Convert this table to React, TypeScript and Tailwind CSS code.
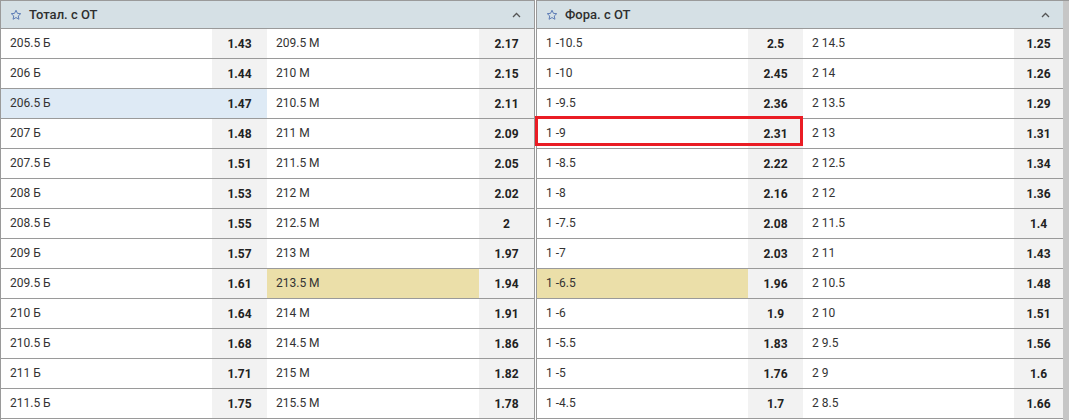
import React from 'react'

type Row = { a: string; ao: string; b: string; bo: string }

const totals: Row[] = [
  { a: '205.5 Б', ao: '1.43', b: '209.5 М', bo: '2.17' },
  { a: '206 Б', ao: '1.44', b: '210 М', bo: '2.15' },
  { a: '206.5 Б', ao: '1.47', b: '210.5 М', bo: '2.11' },
  { a: '207 Б', ao: '1.48', b: '211 М', bo: '2.09' },
  { a: '207.5 Б', ao: '1.51', b: '211.5 М', bo: '2.05' },
  { a: '208 Б', ao: '1.53', b: '212 М', bo: '2.02' },
  { a: '208.5 Б', ao: '1.55', b: '212.5 М', bo: '2' },
  { a: '209 Б', ao: '1.57', b: '213 М', bo: '1.97' },
  { a: '209.5 Б', ao: '1.61', b: '213.5 М', bo: '1.94' },
  { a: '210 Б', ao: '1.64', b: '214 М', bo: '1.91' },
  { a: '210.5 Б', ao: '1.68', b: '214.5 М', bo: '1.86' },
  { a: '211 Б', ao: '1.71', b: '215 М', bo: '1.82' },
  { a: '211.5 Б', ao: '1.75', b: '215.5 М', bo: '1.78' },
]

const handicaps: Row[] = [
  { a: '1 -10.5', ao: '2.5', b: '2 14.5', bo: '1.25' },
  { a: '1 -10', ao: '2.45', b: '2 14', bo: '1.26' },
  { a: '1 -9.5', ao: '2.36', b: '2 13.5', bo: '1.29' },
  { a: '1 -9', ao: '2.31', b: '2 13', bo: '1.31' },
  { a: '1 -8.5', ao: '2.22', b: '2 12.5', bo: '1.34' },
  { a: '1 -8', ao: '2.16', b: '2 12', bo: '1.36' },
  { a: '1 -7.5', ao: '2.08', b: '2 11.5', bo: '1.4' },
  { a: '1 -7', ao: '2.03', b: '2 11', bo: '1.43' },
  { a: '1 -6.5', ao: '1.96', b: '2 10.5', bo: '1.48' },
  { a: '1 -6', ao: '1.9', b: '2 10', bo: '1.51' },
  { a: '1 -5.5', ao: '1.83', b: '2 9.5', bo: '1.56' },
  { a: '1 -5', ao: '1.76', b: '2 9', bo: '1.6' },
  { a: '1 -4.5', ao: '1.7', b: '2 8.5', bo: '1.66' },
]

function Star() {
  return (
    <svg width="12" height="12" viewBox="0 0 24 24" fill="none" stroke="#5d7cb6" strokeWidth="2" strokeLinejoin="round">
      <path d="M12 2.5l2.9 6.2 6.6.7-5 4.5 1.4 6.6L12 17.1l-5.9 3.4 1.4-6.6-5-4.5 6.6-.7z" />
    </svg>
  )
}

function Chevron() {
  return (
    <svg width="9" height="6" viewBox="0 0 9 6" fill="none" stroke="#555" strokeWidth="1.3">
      <path d="M1 5l3.5-3.5L8 5" />
    </svg>
  )
}

function Header({ title }: { title: string }) {
  return (
    <div className="h-[27px] flex items-center bg-[#d5e0e5] border-b border-[#9a9a9a] box-content pl-[9px] pr-[13px]">
      <Star />
      <span className="ml-[7px] text-[13px] font-medium text-[#2f2f2f]">{title}</span>
      <span className="ml-auto mt-[1px]">
        <Chevron />
      </span>
    </div>
  )
}

function Market({
  title,
  rows,
  cols,
  selA,
  hlA,
  hlB,
  boxed,
}: {
  title: string
  rows: Row[]
  cols: string
  selA?: number
  hlA?: number
  hlB?: number
  boxed?: number
}) {
  const khaki = 'bg-[#ebdfa9]'
  return (
    <div className="flex-1 min-w-0">
      <Header title={title} />
      {rows.map((r, i) => (
        <div key={i} className={`grid ${cols} h-[30px] border-b border-[#9a9a9a] text-[12px]`}>
          <div
            className={`relative flex items-center pl-[9px] pb-[2px] text-[#333] ${
              selA === i ? 'bg-[#deeaf5]' : hlA === i ? khaki : ''
            }`}
          >
            {r.a}
            {boxed === i && (
              <div className="absolute -left-[2px] -top-[3px] h-[30px] w-[268px] border-[3px] border-[#ea1c24] pointer-events-none z-10" />
            )}
          </div>
          <div
            className={`flex items-center justify-center font-bold text-[#222] pt-[1px] ${
              selA === i ? 'bg-[#deeaf5]' : 'bg-[#f2f2f2]'
            }`}
          >
            {r.ao}
          </div>
          <div className={`flex items-center pl-[9px] pb-[2px] text-[#333] ${hlB === i ? khaki : ''}`}>{r.b}</div>
          <div className="flex items-center justify-center bg-[#f2f2f2] font-bold text-[#222] pt-[1px]">{r.bo}</div>
        </div>
      ))}
    </div>
  )
}

export default function App() {
  return (
    <div className="w-[1069px] h-[420px] overflow-hidden bg-white flex gap-[1px] font-['Roboto',sans-serif]">
      <div className="w-[535px] border-t border-l border-r border-[#9a9a9a] flex">
        <Market
          title="Тотал. с ОТ"
          rows={totals}
          cols="grid-cols-[211px_55px_212px_55px]"
          selA={2}
          hlB={8}
        />
      </div>
      <div className="flex-1 border-t border-l border-[#9a9a9a] flex">
        <Market
          title="Фора. с ОТ"
          rows={handicaps}
          cols="grid-cols-[211px_55px_211px_1fr]"
          hlA={8}
          boxed={3}
        />
        <div className="w-[6px] bg-[#c6c6c6]" />
      </div>
    </div>
  )
}
